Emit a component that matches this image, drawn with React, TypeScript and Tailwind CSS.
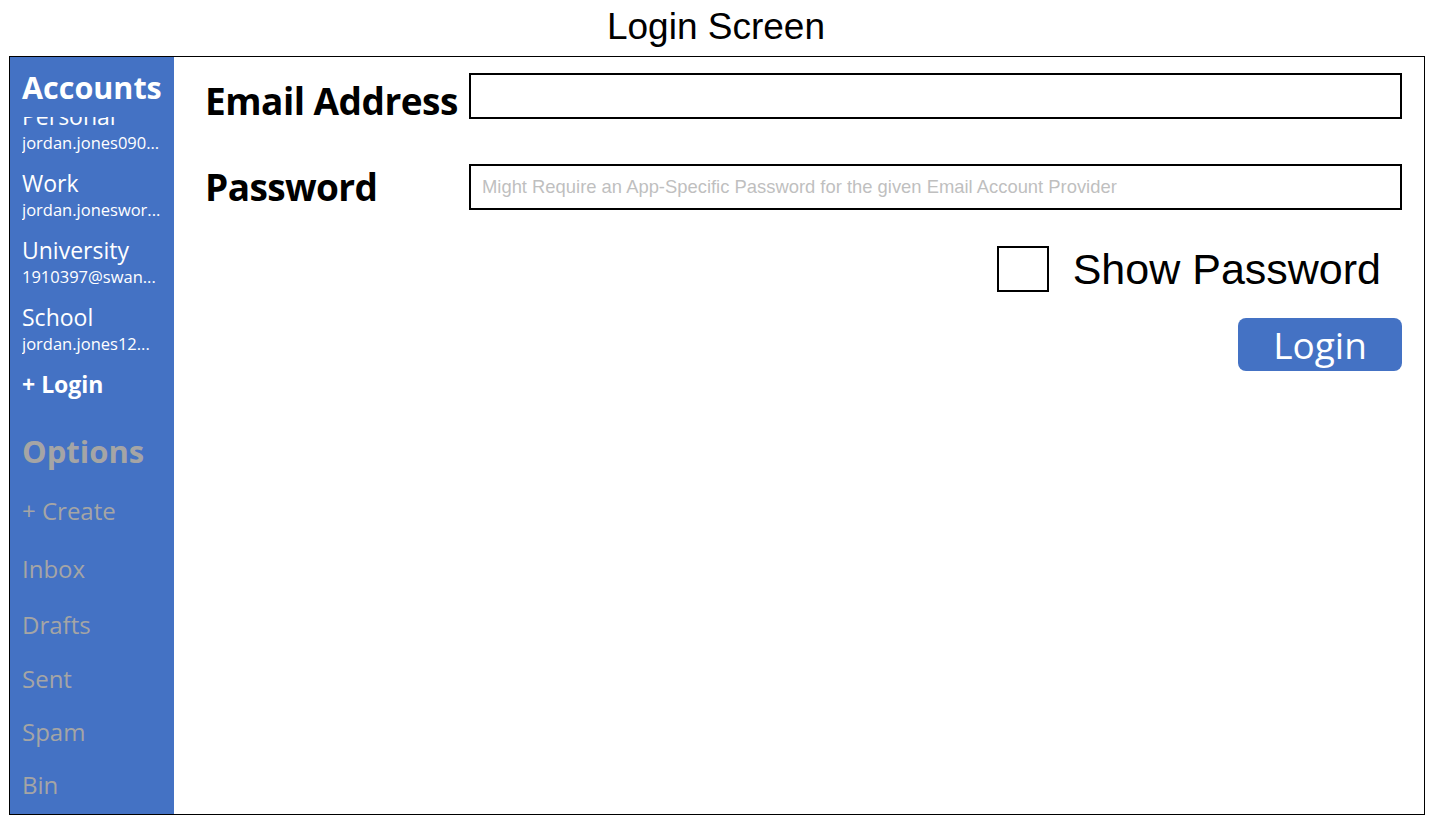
import React from "react";

const seg = { fontFamily: '"Open Sans", "Noto Sans", sans-serif' };
const arial = { fontFamily: '"Liberation Sans", Arial, sans-serif' };

const accounts = [
  { name: "Personal", email: "jordan.jones090..." },
  { name: "Work", email: "jordan.joneswor..." },
  { name: "University", email: "1910397@swan..." },
  { name: "School", email: "jordan.jones12..." },
];

export default function App() {
  return (
    <div className="w-[1432px] h-[818px] bg-white overflow-hidden">
      <div className="h-[54px] flex items-center justify-center text-[37px] text-black" style={arial}>
        Login Screen
      </div>
      <div className="mt-[2px] ml-[9px] w-[1416px] h-[759px] border border-black flex">
        <div className="w-[164px] bg-[#4472C4] flex flex-col pl-[12px]" style={seg}>
          <div className="h-[60px] pt-[10px] text-[30.5px] leading-[40px] font-bold text-white">Accounts</div>
          <div className="overflow-hidden">
            <div className="-mt-[14px] pb-[6px]">
              {accounts.map((a) => (
                <div key={a.name} className="pb-[13px] text-white">
                  <div className="text-[23px] leading-[26px]">{a.name}</div>
                  <div className="text-[16.5px] leading-[28px]">{a.email}</div>
                </div>
              ))}
              <div className="text-[23px] leading-[26px] font-bold text-white">+ Login</div>
            </div>
          </div>
          <div className="mt-[28px] text-[31px] leading-[40px] font-bold text-[#A5A5A5]">Options</div>
          <div className="text-[24px] leading-[40px] text-[#A5A5A5]">
            <div className="mt-[20px]">+ Create</div>
            <div className="mt-[18px]">Inbox</div>
            <div className="mt-[16px]">Drafts</div>
            <div className="mt-[14px]">Sent</div>
            <div className="mt-[13px]">Spam</div>
            <div className="mt-[13px]">Bin</div>
          </div>
        </div>
        <div className="flex-1 pl-[31px] pr-[22px] pt-[16px] flex flex-col">
          <div className="flex items-center h-[46px]">
            <div className="w-[264px] pt-[10px] text-[37px] leading-[46px] font-bold text-black tracking-[-0.5px]" style={seg}>Email Address</div>
            <div className="flex-1 h-[46px] border-2 border-black"></div>
          </div>
          <div className="flex items-center h-[46px] mt-[45px]">
            <div className="w-[264px] text-[37px] leading-[46px] font-bold text-black tracking-[-0.6px]" style={seg}>Password</div>
            <div className="flex-1 h-[46px] border-2 border-black flex items-center pl-[11px] text-[18.4px] text-[#BFBFBF]" style={arial}>
              Might Require an App-Specific Password for the given Email Account Provider
            </div>
          </div>
          <div className="flex items-center justify-end mt-[36px] h-[46px] pr-[21px]">
            <div className="w-[52px] h-[46px] border-2 border-black"></div>
            <div className="ml-[24px] text-[43px] leading-[46px] text-black" style={arial}>Show Password</div>
          </div>
          <div className="flex justify-end mt-[26px]">
            <div className="w-[164px] h-[53px] rounded-[8px] bg-[#4472C4] flex items-center justify-center text-white text-[37px]" style={seg}>
              Login
            </div>
          </div>
        </div>
      </div>
    </div>
  );
}
